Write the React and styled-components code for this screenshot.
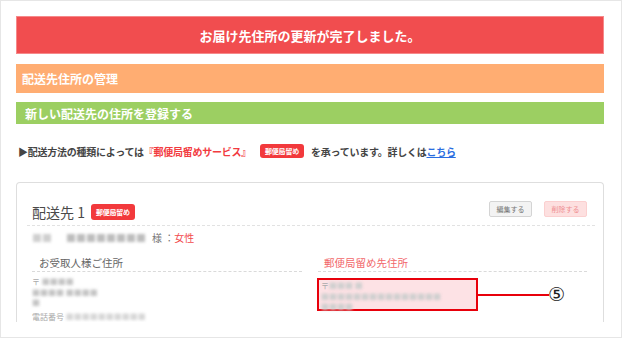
import React from 'react'
import styled, { createGlobalStyle } from 'styled-components'

const GlobalStyle = createGlobalStyle`
  html, body { margin: 0; padding: 0; background: #fff; }
  body { font-family: "Noto Sans CJK JP", "Noto Sans", sans-serif; }
`

const Frame = styled.div`
  width: 622px;
  height: 338px;
  box-sizing: border-box;
  border: 1px solid #e6e6e6;
  padding: 15px 17px 0 15px;
  overflow: hidden;
  display: flex;
  flex-direction: column;
`

const Banner = styled.div`
  height: 38px;
  box-sizing: border-box;
  background: #f14d4f;
  border: 1px solid #f6898a;
  color: #fff;
  font-size: 13px;
  font-weight: 700;
  display: flex;
  align-items: center;
  justify-content: center;
`

const Bar = styled.div`
  margin-top: ${p => p.$gap}px;
  height: ${p => p.$h}px;
  background: ${p => p.$bg};
  color: #fff;
  font-size: 12px;
  font-weight: 700;
  display: flex;
  align-items: center;
  padding-left: ${p => p.$indent}px;
`

const Info = styled.div`
  margin-top: 19px;
  height: 16px;
  display: flex;
  align-items: center;
  font-size: 10px;
  font-weight: 700;
  letter-spacing: -0.25px;
  color: #444;
  padding-left: 2px;
  white-space: nowrap;
`

const Accent = styled.span`
  color: #f23b3f;
`

const Badge = styled.span`
  display: inline-flex;
  align-items: center;
  justify-content: center;
  height: ${p => (p.$small ? 14 : 16)}px;
  padding: 0 5px;
  margin: 0 ${p => p.$mr}px 0 ${p => p.$ml}px;
  background: #f2393c;
  color: #fff;
  border-radius: 3px;
  font-size: 7px;
  font-weight: 700;
  letter-spacing: -0.2px;
`

const Link = styled.a`
  color: #2a6de0;
  text-decoration: underline;
`

const Card = styled.div`
  margin-top: 23px;
  height: 140px;
  flex-shrink: 0;
  box-sizing: border-box;
  border: 1px solid #dedede;
  border-bottom: none;
  border-radius: 4px 4px 0 0;
  padding: 0 8px 0 10px;
  overflow: hidden;
`

const CardHead = styled.div`
  height: 43px;
  box-sizing: border-box;
  border-bottom: 1px dashed #e2e2e2;
  display: flex;
  justify-content: space-between;
  align-items: flex-start;
  padding: 21px 8px 0 5px;
`

const Title = styled.div`
  display: flex;
  align-items: center;
  height: 16px;
  font-size: 14px;
  color: #4a4a4a;
  white-space: nowrap;
`

const Actions = styled.div`
  display: flex;
  gap: 12px;
  margin-top: -3px;
`

const Btn = styled.button`
  width: 43px;
  height: 16px;
  padding: 0;
  border-radius: 2px;
  font-family: inherit;
  font-size: 7px;
  border: 1px solid ${p => (p.$danger ? '#fbd0d0' : '#d4d4d4')};
  background: ${p => (p.$danger ? '#fde0e0' : '#f3f3f3')};
  color: ${p => (p.$danger ? '#ef8f92' : '#777')};
`

const Body = styled.div`
  padding: 0 8px 0 5px;
`

const NameRow = styled.div`
  height: 22px;
  display: flex;
  align-items: center;
  font-size: 10px;
  color: #777;
  white-space: nowrap;
`

const Blur = styled.span`
  color: ${p => p.$c || '#c4c4c4'};
  filter: blur(1.4px);
  margin-right: ${p => p.$mr || 0}px;
`

const Female = styled.span`
  color: #f2494c;
`

const Columns = styled.div`
  display: grid;
  grid-template-columns: 270px 269px;
  column-gap: 16px;
  margin-top: 8px;
`

const SectionHead = styled.div`
  height: 16px;
  line-height: 14px;
  box-sizing: border-box;
  border-bottom: 1px dashed #dadada;
  padding-left: ${p => p.$indent}px;
  font-size: 10.5px;
  color: ${p => (p.$red ? '#f2676a' : '#666')};
`

const Lines = styled.div`
  padding-top: 5px;
  font-size: 8px;
  line-height: 10.5px;
  color: #aaa;
  white-space: nowrap;
`

const Highlight = styled.div`
  position: relative;
  margin: 6px 0 0 -1px;
  width: 161px;
  height: 33px;
  box-sizing: border-box;
  border: 2px solid #e8000b;
  background: #fde2e5;
  padding: 1px 2px;
  font-size: 8px;
  line-height: 10.5px;
  color: #aaa;
  white-space: nowrap;
`

const Leader = styled.div`
  position: absolute;
  left: 100%;
  top: 14px;
  width: 73px;
  height: 2px;
  background: #e8000b;
`

const Marker = styled.span`
  position: absolute;
  left: calc(100% + 72px);
  top: 2px;
  font-size: 19px;
  line-height: 24px;
  color: #222;
  font-family: "DejaVu Sans", sans-serif;
`

export default function App() {
  return (
    <>
      <GlobalStyle />
      <Frame>
        <Banner>お届け先住所の更新が完了しました。</Banner>
        <Bar $gap={10} $h={29} $bg="#ffad72" $indent={6}>配送先住所の管理</Bar>
        <Bar $gap={9} $h={22} $bg="#9ccf62" $indent={9}>新しい配送先の住所を登録する</Bar>
        <Info>
          ▶配送方法の種類によっては<Accent>『郵便局留めサービス』</Accent>
          <Badge $small $ml={9} $mr={7}>郵便局留め</Badge>
          を承っています。詳しくは<Link href="#">こちら</Link>
        </Info>
        <Card>
          <CardHead>
            <Title>
              配送先 1<Badge $ml={6} $mr={0}>郵便局留め</Badge>
            </Title>
            <Actions>
              <Btn>編集する</Btn>
              <Btn $danger>削除する</Btn>
            </Actions>
          </CardHead>
          <Body>
            <NameRow>
              <Blur $mr={14} $c="#cfcfcf">■■</Blur>
              <Blur $mr={6} $c="#bdbdbd">■■■■■■■■</Blur>
              様 ：<Female>女性</Female>
            </NameRow>
            <Columns>
              <div>
                <SectionHead $indent={7}>お受取人様ご住所</SectionHead>
                <Lines>
                  <div>〒 <Blur>■■■■</Blur></div>
                  <div><Blur>■■■■ ■■■■</Blur></div>
                  <div><Blur>■</Blur></div>
                  <div style={{ marginTop: 3 }}>電話番号 <Blur $c="#d6d6d6">■■■■■■■■■■</Blur></div>
                </Lines>
              </div>
              <div>
                <SectionHead $indent={6} $red>郵便局留め先住所</SectionHead>
                <Highlight>
                  <div>〒<Blur $c="#cfcfcf">■■■ ■</Blur></div>
                  <div><Blur $c="#cfcfcf">■■■■■■■■■■■■■■■</Blur></div>
                  <div><Blur $c="#cfcfcf">■■■■</Blur></div>
                  <Leader />
                  <Marker>⑤</Marker>
                </Highlight>
              </div>
            </Columns>
          </Body>
        </Card>
      </Frame>
    </>
  )
}
